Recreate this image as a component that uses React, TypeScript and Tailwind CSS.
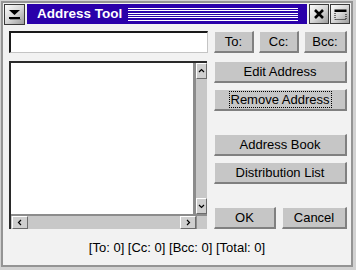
import React from "react";

const btn =
  "flex items-center justify-center bg-[#c6c6c6] border-t border-l border-t-[#f2f2f2] border-l-[#f2f2f2] border-b-2 border-r-2 border-b-[#808080] border-r-[#808080] text-[13px] text-black leading-none";

function Btn({ w, children, focus }: { w: string; children: React.ReactNode; focus?: boolean }) {
  return (
    <div className={`${btn} ${w} h-[22px]`}>
      {focus ? (
        <span className="border border-dotted border-black px-[1px] py-[1px]">{children}</span>
      ) : (
        children
      )}
    </div>
  );
}

const arrowBtn =
  "flex items-center justify-center bg-[#cfcfcf] border-t border-l border-t-white border-l-white border-b border-r border-b-[#6c6c6c] border-r-[#6c6c6c]";

function Chevron({ dir }: { dir: "up" | "down" | "left" | "right" }) {
  const pts: Record<string, string> = {
    up: "1,4 3.5,1.5 6,4",
    down: "1,2 3.5,4.5 6,2",
    left: "4,1 1.5,3.5 4,6",
    right: "2,1 4.5,3.5 2,6",
  };
  return (
    <svg width="7" height="7" viewBox="0 0 7 7">
      <polyline points={pts[dir]} fill="none" stroke="#000" strokeWidth="1.2" />
    </svg>
  );
}

const silver =
  "border border-[#3a3a3a] bg-linear-to-br from-[#fafafa] via-[#d8d8d8] to-[#9c9c9c] flex items-center justify-center";

export default function App() {
  return (
    <div
      className="w-[356px] h-[270px] bg-[#d2d2d2] pl-[1px] pt-[1px] pr-[3px] pb-[3px] flex flex-col"
      style={{ fontFamily: '"Liberation Sans", Arial, sans-serif' }}
    >
      <div className="flex-1 border-2 border-[#949494] bg-[#f2f2f2] flex flex-col">
        {/* Title bar */}
        <div className="flex items-start pt-[1px] pl-[1px] pr-[1px] h-[22px]">
          <div className={`${silver} w-[21px] h-[21px]`}>
            <svg width="13" height="11" viewBox="0 0 13 11">
              <polygon points="1,1 12,1 6.5,6" fill="#000" />
              <rect x="1" y="8" width="11" height="2" fill="#000" />
              <rect x="2" y="10" width="11" height="1" fill="#8a8a8a" />
            </svg>
          </div>
          <div className="ml-[2px] w-[280px] h-[20px] bg-[#2a00aa] flex items-center">
            <span className="ml-[10px] w-[81px] text-white font-bold text-[13.5px] leading-none whitespace-nowrap">
              Address Tool
            </span>
            <div className="ml-[10px] w-[170px] flex flex-col">
              <div className="h-[1px] bg-white" />
              <div className="h-[1px] bg-white mt-[1px]" />
              <div className="h-[1px] bg-white mt-[2px]" />
              <div className="h-[1px] bg-white mt-[1px]" />
              <div className="h-[1px] bg-white mt-[1px]" />
              <div className="h-[1px] bg-white mt-[2px]" />
            </div>
          </div>
          <div className={`${silver} ml-[2px] w-[20px] h-[20px]`}>
            <svg width="12" height="12" viewBox="0 0 12 12">
              <path d="M2 2 L10 10 M10 2 L2 10" stroke="#000" strokeWidth="2.6" />
            </svg>
          </div>
          <div className={`${silver} ml-[1px] w-[20px] h-[20px]`}>
            <svg width="13" height="11" viewBox="0 0 13 11">
              <rect x="0.5" y="0.5" width="12" height="2.5" fill="#000" />
              <path d="M1 4 V10.5 H12 V4" fill="none" stroke="#000" strokeWidth="1" strokeDasharray="1 1" />
            </svg>
          </div>
        </div>

        {/* Row 1 */}
        <div className="flex items-start pl-[6px] mt-[6px]">
          <div className="w-[199px] h-[22px] bg-white border-t-2 border-l-2 border-t-[#1a1a1a] border-l-[#1a1a1a] border-b border-r border-b-[#c4c4c4] border-r-[#c4c4c4]" />
          <div className="ml-[6px]">
            <Btn w="w-[40px]">To:</Btn>
          </div>
          <div className="ml-[5px]">
            <Btn w="w-[40px]">Cc:</Btn>
          </div>
          <div className="ml-[5px]">
            <Btn w="w-[43px]">Bcc:</Btn>
          </div>
        </div>

        {/* Row 2 */}
        <div className="flex pl-[6px] mt-[8px]">
          <div className="w-[198px] h-[168px] border-t-2 border-l-2 border-t-[#2a2a2a] border-l-[#2a2a2a] flex flex-col">
            <div className="flex flex-1 min-h-0">
              <div className="flex-1 bg-white" />
              <div className="w-[14px] border-l-[3px] border-l-[#8c8c8c] bg-[#c8c8c8] flex flex-col justify-between">
                <div className={`${arrowBtn} h-[16px]`}>
                  <Chevron dir="up" />
                </div>
                <div className={`${arrowBtn} h-[16px]`}>
                  <Chevron dir="down" />
                </div>
              </div>
            </div>
            <div className="flex h-[15px] border-t-2 border-t-[#8c8c8c]">
              <div className="flex-1 bg-[#c8c8c8] flex justify-between pl-[1px]">
                <div className={`${arrowBtn} w-[16px]`}>
                  <Chevron dir="left" />
                </div>
                <div className={`${arrowBtn} w-[16px]`}>
                  <Chevron dir="right" />
                </div>
              </div>
              <div className="w-[11px] bg-[#c8c8c8] border-l border-l-[#8c8c8c]" />
            </div>
          </div>

          <div className="ml-[7px] w-[133px] flex flex-col">
            <Btn w="w-full">Edit Address</Btn>
            <div className="mt-[6px]">
              <Btn w="w-full" focus>
                Remove Address
              </Btn>
            </div>
            <div className="mt-[23px]">
              <Btn w="w-full">Address Book</Btn>
            </div>
            <div className="mt-[6px]">
              <Btn w="w-full">Distribution List</Btn>
            </div>
            <div className="mt-[23px] flex">
              <Btn w="w-[62px]">OK</Btn>
              <div className="ml-[6px]">
                <Btn w="w-[65px]">Cancel</Btn>
              </div>
            </div>
          </div>
        </div>

        {/* Status */}
        <div className="mt-[11px] text-center text-[13px] leading-[16px] text-black">
          [To: 0] [Cc: 0] [Bcc: 0] [Total: 0]
        </div>
      </div>
    </div>
  );
}
